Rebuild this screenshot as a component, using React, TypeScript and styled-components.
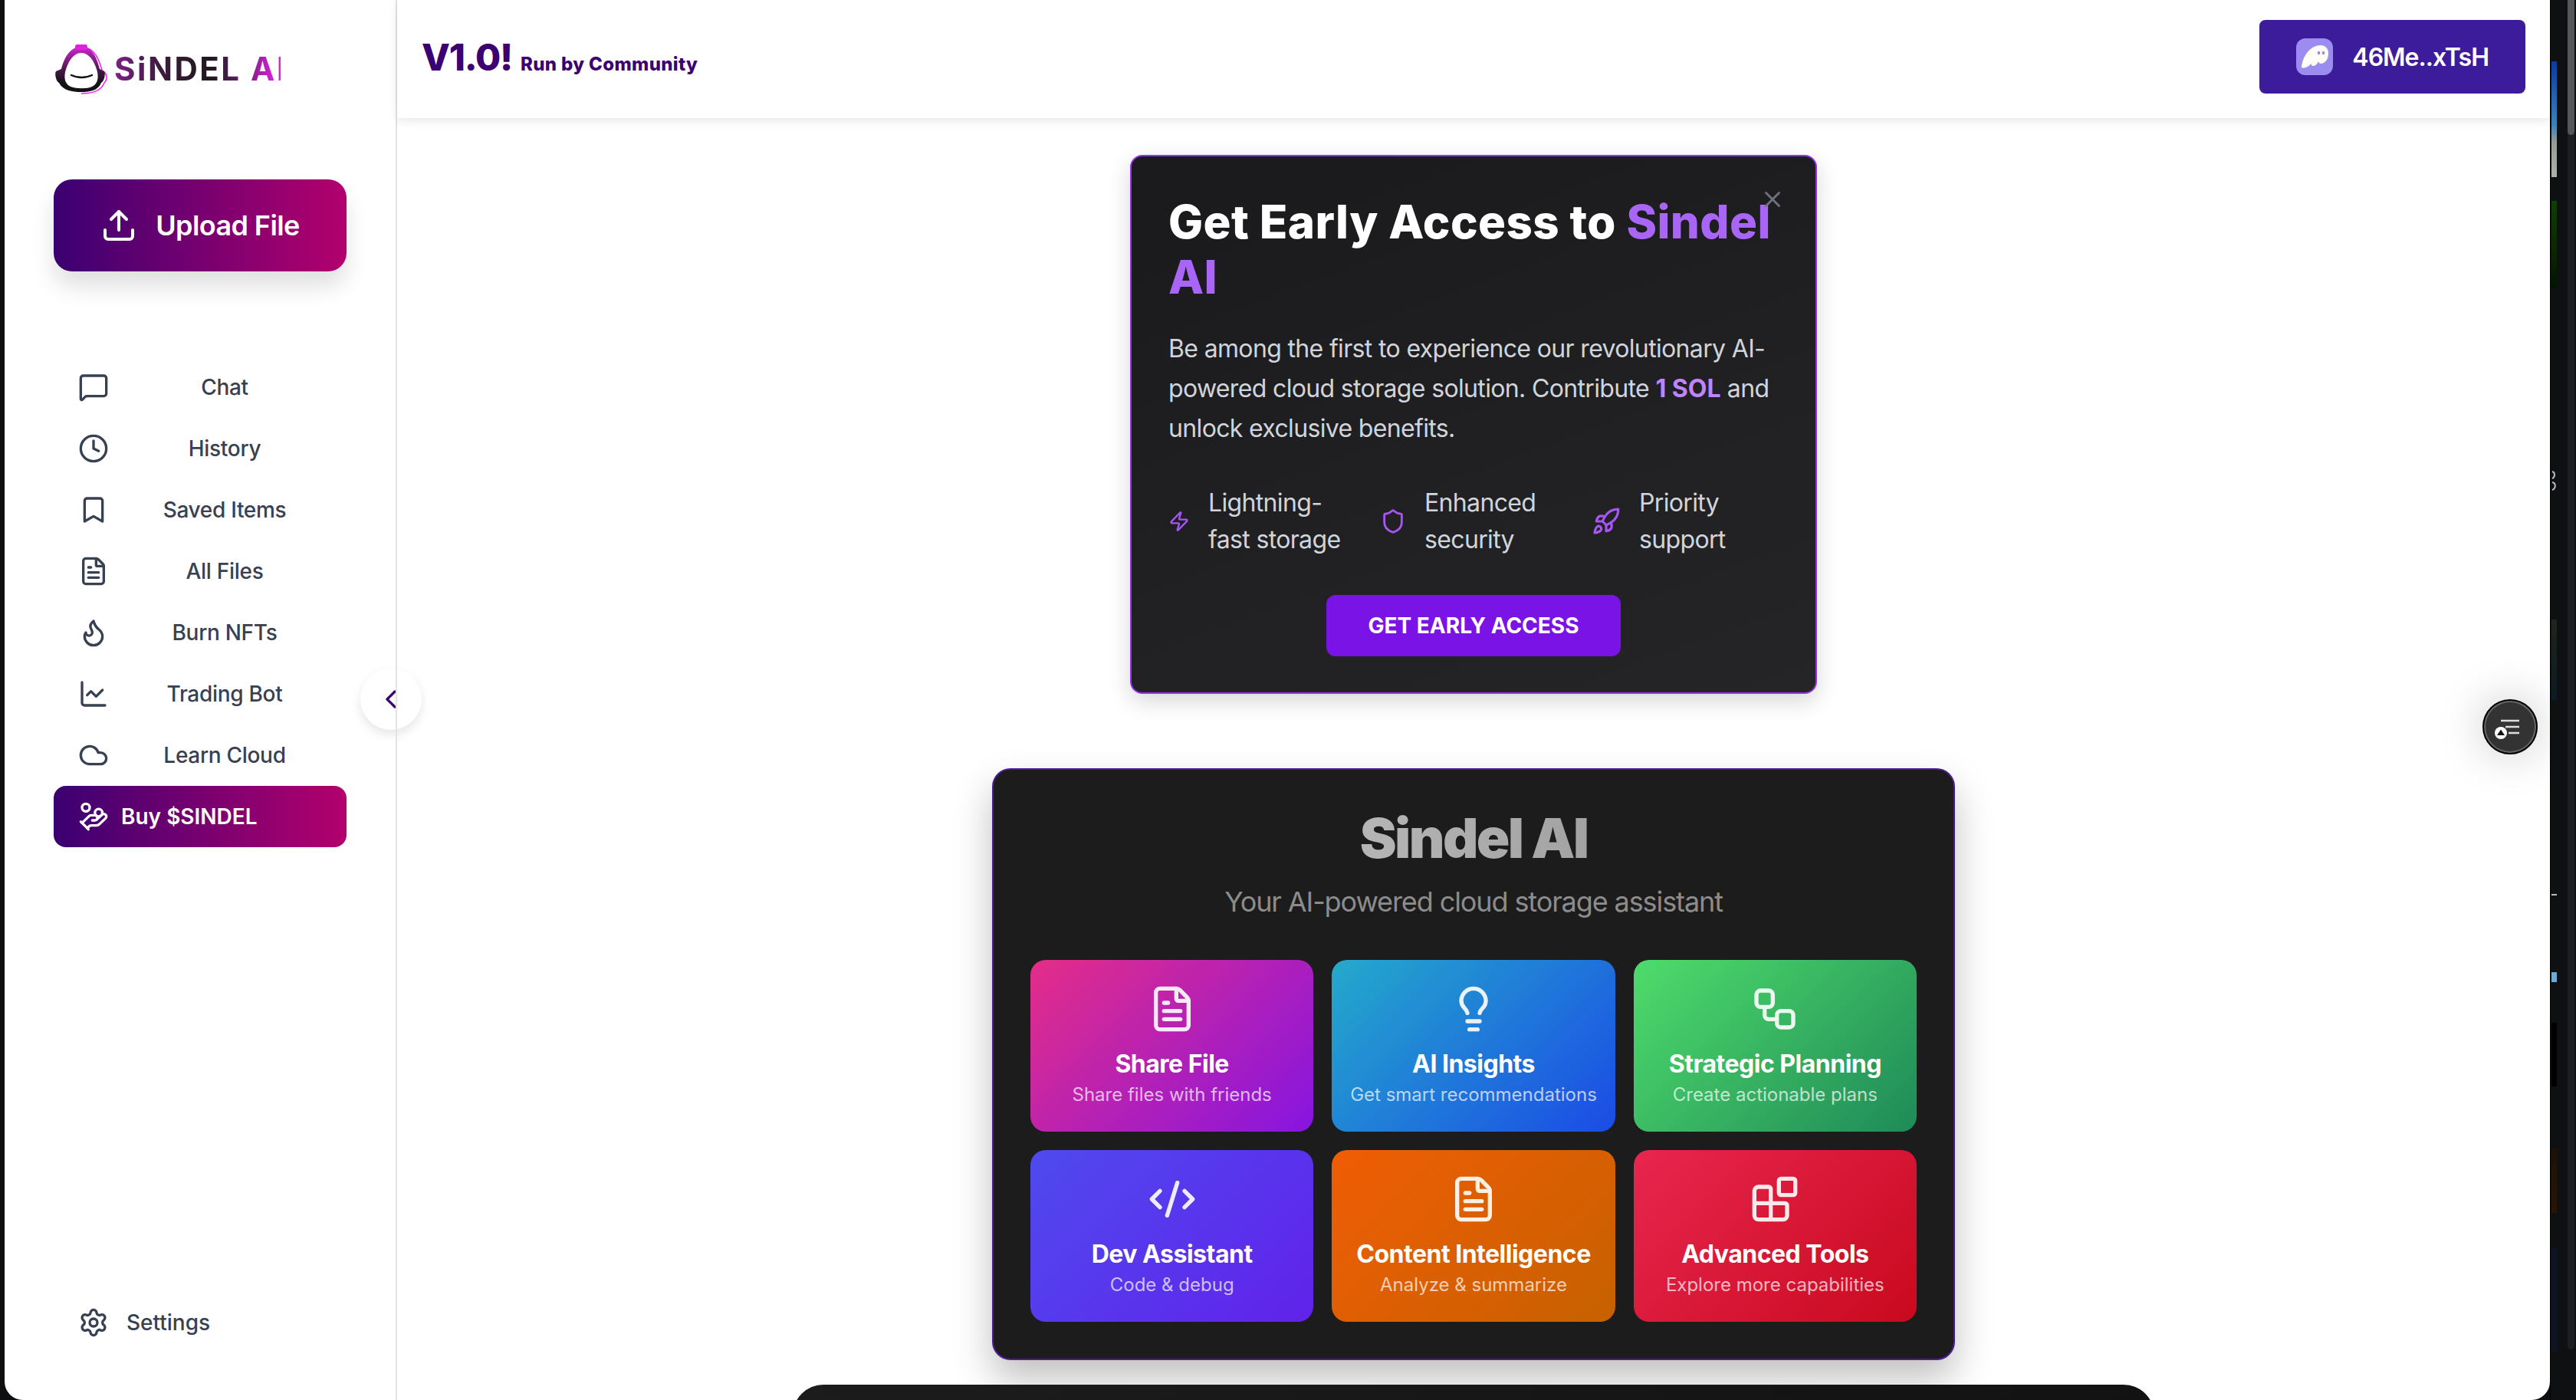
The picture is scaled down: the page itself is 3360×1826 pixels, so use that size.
import { createGlobalStyle, styled } from "styled-components";
import {
  Bookmark,
  Blocks,
  ChartLine,
  ChevronLeft,
  Clock,
  Cloud,
  CodeXml,
  FileText,
  Flame,
  HandCoins,
  Lightbulb,
  MessageSquare,
  Rocket,
  Settings,
  Shield,
  Upload,
  Workflow,
  X,
  Zap,
} from "lucide-react";

const navItems = [
  { label: "Chat", icon: MessageSquare },
  { label: "History", icon: Clock },
  { label: "Saved Items", icon: Bookmark },
  { label: "All Files", icon: FileText },
  { label: "Burn NFTs", icon: Flame },
  { label: "Trading Bot", icon: ChartLine },
  { label: "Learn Cloud", icon: Cloud },
];

const features = [
  { label: "Lightning-fast storage", icon: Zap, size: 28 },
  { label: "Enhanced security", icon: Shield, size: 34 },
  { label: "Priority support", icon: Rocket, size: 38 },
];

const tiles = [
  { title: "Share File", text: "Share files with friends", icon: FileText, from: "#e42d88", to: "#8615e0" },
  { title: "AI Insights", text: "Get smart recommendations", icon: Lightbulb, from: "#24aacb", to: "#1b4be6" },
  { title: "Strategic Planning", text: "Create actionable plans", icon: Workflow, from: "#4fdc6b", to: "#1f8a58" },
  { title: "Dev Assistant", text: "Code & debug", icon: CodeXml, from: "#4f4aef", to: "#6122ea" },
  { title: "Content Intelligence", text: "Analyze & summarize", icon: FileText, from: "#f05d04", to: "#c66100" },
  { title: "Advanced Tools", text: "Explore more capabilities", icon: Blocks, from: "#e8264f", to: "#c80a1e" },
];

const upperThumbs = [
  { gap: 80, height: 151, fill: "linear-gradient(180deg, #0a3a9c, #3b82b8 55%, #9a9a94 70%, #b0b0aa)" },
  { gap: 31, height: 114, fill: "linear-gradient(180deg, #123f06, #041402)" },
];

const lowerThumbs = [
  { gap: 167, height: 105, fill: "linear-gradient(180deg, #20251c, #0c1a24)" },
  { gap: 253, height: 2, fill: "#bbb" },
  { gap: 100, height: 13, fill: "#6fa8d0" },
  { gap: 53, height: 83, fill: "#000" },
  { gap: 81, height: 84, fill: "linear-gradient(180deg, #1c1208, #2a1406)" },
  { gap: 46, height: 135, fill: "#0e1420" },
];

function App() {
  return (
    <>
      <GlobalStyle />
      <Frame>
        <Window>
          <Sidebar>
            <LogoRow>
              <svg width="72" height="66" viewBox="0 0 72 66" fill="none">
                <defs>
                  <linearGradient id="headFill" x1="0" y1="0" x2="0" y2="1">
                    <stop offset="0" stopColor="#d422d4" />
                    <stop offset="0.5" stopColor="#4a1a4c" />
                    <stop offset="0.8" stopColor="#141014" />
                  </linearGradient>
                </defs>
                <path
                  d="M44 5C54 8 60 22 63 34C71 38 70 46 66 50C62 60 52 64 36 64"
                  stroke="#f020f0"
                  strokeWidth="1.5"
                />
                <path
                  d="M36 3C22 3 14 16 10 32L3 35C1 38 3 48 7 50C12 60 24 62 36 62C48 62 58 60 62 50C66 48 68 38 66 35L60 32C56 16 50 3 36 3Z"
                  fill="url(#headFill)"
                />
                <path
                  d="M36 11C25 11 18 24 15 36C13 46 16 52 22 55C30 58 44 58 50 55C56 52 59 46 57 36C54 24 47 11 36 11Z"
                  fill="#fff"
                />
                <rect x="28" y="0" width="16" height="7" rx="3" fill="#e020e0" />
                <path d="M23 40C31 44 42 44 50 40" stroke="#141014" strokeWidth="2.5" strokeLinecap="round" />
              </svg>
              <LogoText>
                <LogoWord>SiNDEL AI</LogoWord>
              </LogoText>
            </LogoRow>

            <UploadButton>
              <Upload size={48} strokeWidth={2} />
              Upload File
            </UploadButton>

            <Nav>
              {navItems.map(({ label, icon: Icon }) => (
                <NavItem key={label}>
                  <Icon size={40} strokeWidth={2} />
                  <NavLabel>{label}</NavLabel>
                </NavItem>
              ))}
              <BuyItem>
                <HandCoins size={40} strokeWidth={2} />
                Buy $SINDEL
              </BuyItem>
            </Nav>

            <SettingsItem>
              <Settings size={40} strokeWidth={2} />
              Settings
            </SettingsItem>

            <CollapseButton>
              <ChevronLeft size={40} strokeWidth={2} />
            </CollapseButton>
          </Sidebar>

          <Main>
            <TopBar>
              <Version>
                <VersionNumber>V1.0!</VersionNumber>
                <VersionNote>Run by Community</VersionNote>
              </Version>
              <WalletButton>
                <svg width="48" height="48" viewBox="0 0 48 48">
                  <rect width="48" height="48" rx="12" fill="#9b8cf0" />
                  <path
                    d="M7 38C8 24 18 9 32 9C38 9 42 13 42 20C42 28 37 33 32 33C30 33 29.5 31 29 30C28 33 25 36 22 36C20 36 19.5 34 19.5 33C17 36 13 38.5 9.5 38.5C8 38.5 7 38.5 7 38Z"
                    fill="#fffdf8"
                  />
                  <ellipse cx="29.5" cy="19" rx="1.8" ry="2.3" fill="#9b8cf0" />
                  <ellipse cx="35.5" cy="19" rx="1.8" ry="2.3" fill="#9b8cf0" />
                </svg>
                46Me..xTsH
              </WalletButton>
            </TopBar>

            <Content>
              <PromoCard>
                <CloseButton>
                  <X size={34} strokeWidth={2} />
                </CloseButton>
                <PromoTitle>
                  Get Early Access to <Accent>Sindel AI</Accent>
                </PromoTitle>
                <PromoText>
                  Be among the first to experience our revolutionary AI-powered cloud storage solution. Contribute{" "}
                  <Strong>1 SOL</Strong> and unlock exclusive benefits.
                </PromoText>
                <FeatureGrid>
                  {features.map(({ label, icon: Icon, size }) => (
                    <Feature key={label}>
                      <Icon size={size} strokeWidth={2} />
                      <span>{label}</span>
                    </Feature>
                  ))}
                </FeatureGrid>
                <EarlyButton>Get Early Access</EarlyButton>
              </PromoCard>

              <AssistantCard>
                <AssistantTitle>Sindel AI</AssistantTitle>
                <AssistantText>Your AI-powered cloud storage assistant</AssistantText>
                <TileGrid>
                  {tiles.map(({ title, text, icon: Icon, from, to }) => (
                    <Tile key={title} $from={from} $to={to}>
                      <TileIcon>
                        <Icon size={64} strokeWidth={2} />
                      </TileIcon>
                      <TileTitle>{title}</TileTitle>
                      <TileText>{text}</TileText>
                    </Tile>
                  ))}
                </TileGrid>
              </AssistantCard>

              <BottomPanel />
            </Content>

            <FloatingButton>
              <svg width="48" height="48" viewBox="-24 -24 48 48" fill="none">
                <path d="M-12 -8H12M-6 0H12M-2 8H12" stroke="#ddd" strokeWidth="2.5" />
                <circle cx="-12" cy="8" r="8" fill="#fff" />
                <path d="M-12 3.5L-7 11H-17Z" fill="#111" />
              </svg>
            </FloatingButton>
          </Main>
        </Window>

        <Strip>
          <Thumbs>
            {upperThumbs.map((thumb, i) => (
              <Thumb key={i} $gap={thumb.gap} $height={thumb.height} $fill={thumb.fill} />
            ))}
            <StripMark width="7" height="28" viewBox="0 0 7 28" fill="none">
              <path d="M1 2C5 3 5 9 1 11M1 16C6 17 6 24 1 26" stroke="#bbb" strokeWidth="2" />
            </StripMark>
            {lowerThumbs.map((thumb, i) => (
              <Thumb key={i} $gap={thumb.gap} $height={thumb.height} $fill={thumb.fill} />
            ))}
          </Thumbs>
          <ScrollTrack>
            <ScrollThumb />
          </ScrollTrack>
        </Strip>
      </Frame>
    </>
  );
}

const GlobalStyle = createGlobalStyle`
  html, body {
    margin: 0;
    padding: 0;
    overflow: hidden;
    background: #0e0f11;
  }
  * {
    box-sizing: border-box;
  }
  body {
    font-family: Inter, "Liberation Sans", sans-serif;
  }
`;

const Frame = styled.div`
  display: flex;
  height: 1826px;
  padding-left: 6px;
  background: #0e0f11;
  overflow: hidden;
`;

const Window = styled.div`
  flex: 1;
  display: flex;
  min-width: 0;
  background: #fff;
  border-radius: 0 0 24px 24px;
  overflow: hidden;
`;

const Sidebar = styled.aside`
  position: relative;
  flex: 0 0 510px;
  display: flex;
  flex-direction: column;
  padding: 58px 64px 61px;
`;

const LogoRow = styled.div`
  display: flex;
  align-items: center;
  gap: 7px;
  height: 66px;
`;

const LogoText = styled.div`
  width: 217px;
  padding-bottom: 3px;
  overflow: hidden;
`;

const LogoWord = styled.div`
  width: 240px;
  font-size: 42px;
  font-weight: 700;
  letter-spacing: 2.5px;
  white-space: nowrap;
  background: linear-gradient(90deg, #7b2182, #3a1c3c 26%, #201820 52%, #5a2060 68%, #e020e0 88%);
  -webkit-background-clip: text;
  background-clip: text;
  color: transparent;
`;

const UploadButton = styled.button`
  display: flex;
  align-items: center;
  justify-content: center;
  gap: 24px;
  height: 120px;
  margin-top: 110px;
  border: 0;
  border-radius: 24px;
  background: linear-gradient(90deg, #3b0071, #b3006e);
  box-shadow: 0 20px 30px rgba(0, 0, 0, 0.12);
  color: #fff;
  font: 600 36px Inter, sans-serif;
  letter-spacing: -0.6px;
`;

const Nav = styled.nav`
  display: flex;
  flex-direction: column;
  margin-top: 111px;
`;

const NavItem = styled.a`
  display: flex;
  align-items: center;
  gap: 12px;
  height: 80px;
  padding: 0 20px 0 32px;
  color: #374151;
  font-size: 28px;
  font-weight: 500;
  letter-spacing: -0.3px;
`;

const NavLabel = styled.span`
  flex: 1;
  text-align: center;
`;

const BuyItem = styled.a`
  display: flex;
  align-items: center;
  gap: 16px;
  height: 80px;
  padding: 0 32px;
  border-radius: 16px;
  background: linear-gradient(90deg, #3b0071, #b3006e);
  color: #fff;
  font-size: 28px;
  font-weight: 600;
`;

const SettingsItem = styled.a`
  display: flex;
  align-items: center;
  gap: 23px;
  height: 80px;
  margin-top: auto;
  padding: 0 32px;
  color: #374151;
  font-size: 28px;
  font-weight: 500;
`;

const CollapseButton = styled.button`
  position: absolute;
  top: 872px;
  left: 464px;
  z-index: 1;
  display: flex;
  align-items: center;
  justify-content: center;
  width: 80px;
  height: 80px;
  padding: 0;
  border: 0;
  border-radius: 50%;
  background: #fff;
  box-shadow: 0 6px 14px rgba(0, 0, 0, 0.1);
  color: #3b0071;
`;

const Main = styled.main`
  position: relative;
  z-index: 2;
  flex: 1;
  min-width: 0;
  display: flex;
  flex-direction: column;
  border-left: 2px solid #e2e2ea;
`;

const TopBar = styled.header`
  display: flex;
  align-items: center;
  justify-content: space-between;
  height: 154px;
  padding: 26px 32px 32px;
  background: #fff;
  box-shadow: 0 4px 12px rgba(0, 0, 0, 0.09);
`;

const Version = styled.div`
  display: flex;
  align-items: baseline;
  gap: 11px;
  color: #3b0071;
`;

const VersionNumber = styled.span`
  font-size: 48px;
  font-weight: 800;
  letter-spacing: -1.2px;
`;

const VersionNote = styled.span`
  font-size: 24px;
  font-weight: 800;
  letter-spacing: 0.35px;
`;

const WalletButton = styled.button`
  display: flex;
  align-items: center;
  gap: 25px;
  height: 96px;
  padding: 0 48px;
  border: 0;
  border-radius: 8px;
  background: #3d1c9c;
  color: #fff;
  font: 600 32px Inter, sans-serif;
  letter-spacing: -1px;
`;

const Content = styled.div`
  flex: 1;
  display: flex;
  flex-direction: column;
  align-items: center;
  padding-top: 48px;
`;

const PromoCard = styled.section`
  position: relative;
  flex: none;
  width: 896px;
  padding: 49px 48px 47px;
  border: 2px solid #9333ea;
  border-radius: 16px;
  background: linear-gradient(160deg, #1a1a1c, #252528);
  box-shadow: 0 10px 30px rgba(0, 0, 0, 0.16);
`;

const CloseButton = styled.button`
  position: absolute;
  top: 39px;
  right: 39px;
  z-index: 1;
  display: flex;
  padding: 0;
  border: 0;
  background: none;
  color: #6b7280;
`;

const PromoTitle = styled.h2`
  margin: 0;
  color: #fff;
  font-size: 60px;
  font-weight: 800;
  line-height: 72px;
  letter-spacing: 0.4px;
`;

const Accent = styled.span`
  color: #a966f6;
`;

const PromoText = styled.p`
  margin: 32px 0 0;
  color: #d1d5db;
  font-size: 32px;
  line-height: 52px;
  letter-spacing: -0.65px;
`;

const Strong = styled.strong`
  color: #c084fc;
  font-weight: 700;
  letter-spacing: 0;
`;

const FeatureGrid = styled.div`
  display: grid;
  grid-template-columns: repeat(3, 1fr);
  gap: 32px;
  margin-top: 47px;
`;

const Feature = styled.div`
  display: flex;
  align-items: center;
  gap: 24px;
  color: #d1d5db;
  font-size: 32px;
  line-height: 48px;
  letter-spacing: -0.65px;
  svg {
    flex: none;
    color: #a855f7;
  }
`;

const EarlyButton = styled.button`
  display: block;
  width: 384px;
  height: 80px;
  margin: 48px auto 0;
  border: 0;
  border-radius: 12px;
  background: #7a14e6;
  color: #fff;
  font: 700 28px Inter, sans-serif;
  text-transform: uppercase;
`;

const AssistantCard = styled.section`
  flex: none;
  width: 1256px;
  margin-top: 97px;
  padding: 45px 48px 48px;
  border: 2px solid #4c1d95;
  border-radius: 24px;
  background: #1c1c1c;
  box-shadow: 0 25px 50px rgba(0, 0, 0, 0.25);
  text-align: center;
`;

const AssistantTitle = styled.h2`
  margin: 0;
  font-size: 72px;
  font-weight: 900;
  line-height: 88px;
  letter-spacing: -2.6px;
  background: linear-gradient(90deg, #d0d0d0, #888);
  -webkit-background-clip: text;
  background-clip: text;
  color: transparent;
`;

const AssistantText = styled.p`
  margin: 11px 0 0;
  color: #8c8c8c;
  font-size: 36px;
  line-height: 56px;
  letter-spacing: -1.1px;
`;

const TileGrid = styled.div`
  display: grid;
  grid-template-columns: repeat(3, 1fr);
  gap: 24px;
  margin-top: 48px;
`;

const Tile = styled.a<{ $from: string; $to: string }>`
  display: flex;
  flex-direction: column;
  align-items: center;
  height: 224px;
  padding-top: 32px;
  border-radius: 20px;
  background: linear-gradient(135deg, ${(p) => p.$from}, ${(p) => p.$to});
  color: #fff;
`;

const TileIcon = styled.div`
  display: flex;
  opacity: 0.9;
`;

const TileTitle = styled.div`
  margin-top: 16px;
  font-size: 32px;
  font-weight: 700;
  line-height: 48px;
  letter-spacing: -0.5px;
`;

const TileText = styled.div`
  color: rgba(255, 255, 255, 0.7);
  font-size: 24px;
  line-height: 32px;
`;

const BottomPanel = styled.div`
  flex: none;
  width: 1776px;
  height: 80px;
  margin-top: 32px;
  border-radius: 40px 40px 0 0;
  background: linear-gradient(90deg, #1c1c1c, #121212);
`;

const FloatingButton = styled.button`
  position: absolute;
  top: 912px;
  right: 16px;
  display: flex;
  align-items: center;
  justify-content: center;
  width: 72px;
  height: 72px;
  padding: 0;
  border: 2px solid #000;
  border-radius: 50%;
  background: #333;
  box-shadow: inset 0 0 0 2px #666, 0 0 60px rgba(0, 0, 0, 0.22);
`;

const Strip = styled.div`
  flex: 0 0 34px;
  display: flex;
  justify-content: space-between;
  padding-left: 1px;
  padding-right: 2px;
  background: #0f1012;
  border-left: 1px solid #000;
`;

const Thumbs = styled.div`
  display: flex;
  flex-direction: column;
  width: 7px;
`;

const Thumb = styled.div<{ $gap: number; $height: number; $fill: string }>`
  flex: none;
  margin-top: ${(p) => p.$gap}px;
  height: ${(p) => p.$height}px;
  background: ${(p) => p.$fill};
`;

const StripMark = styled.svg`
  flex: none;
  margin-top: 237px;
`;

const ScrollTrack = styled.div`
  width: 9px;
  height: 1760px;
  border-radius: 0 0 5px 5px;
  background: #1d1e21;
`;

const ScrollThumb = styled.div`
  height: 176px;
  border-radius: 0 0 5px 5px;
  background: #55565a;
`;

export default App;
